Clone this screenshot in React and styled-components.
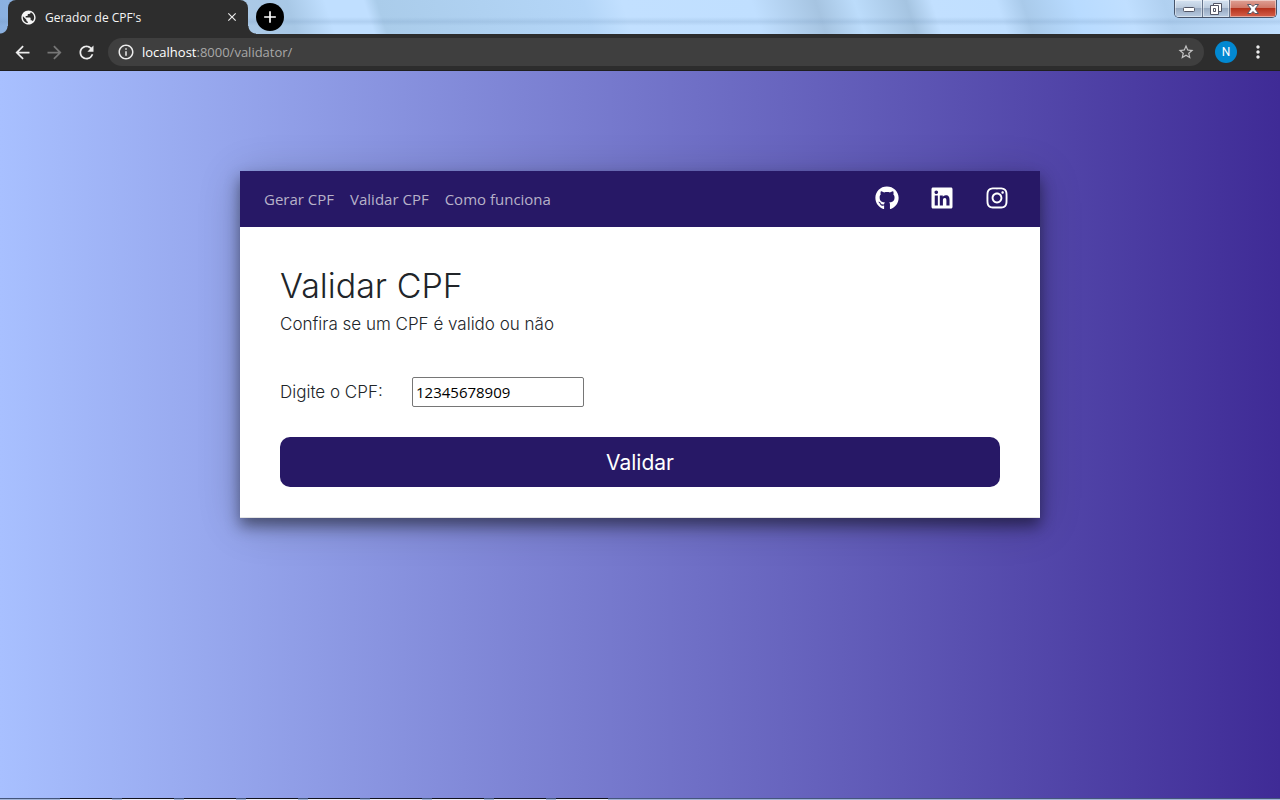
import React from 'react';
import styled, { createGlobalStyle } from 'styled-components';
import { FaGithub, FaLinkedin, FaInstagram } from 'react-icons/fa';
import { MdArrowBack, MdArrowForward, MdRefresh, MdInfoOutline, MdStarBorder, MdMoreVert, MdPublic, MdClose, MdAdd } from 'react-icons/md';

const GlobalStyle = createGlobalStyle`
  * { box-sizing: border-box; }
  html, body, #root { height: 100%; margin: 0; }
  body { font-family: "Open Sans", "Noto Sans", sans-serif; color: #212529; }
  button, input { font: inherit; }
  svg { display: block; }
`;

const Window = styled.div`
  display: flex;
  flex-direction: column;
  min-height: 100%;
`;

const TitleBar = styled.header`
  display: flex;
  align-items: flex-start;
  height: 34px;
  padding-left: 8px;
  background:
    linear-gradient(180deg, transparent 50%, rgba(110, 145, 185, 0.2) 64%, transparent 76%),
    linear-gradient(72deg, #8ab0e0 0, #abc9e6 20%, #a8c8e6 23%, #c0dfff 26%, #c0dfff 29%, #aaccea 30%, #b4d6f8 46%, #c2e0ff 49%, #c0dfff 59%, #a6c4e1 64%, #bcdcfb 67%, #a5c4e1 71%, #c2e0ff 73%, #c0dfff 78%, #a9caea 80%, #b8dbff 84%, #c0dfff 88%, #b0d0f0 91%, #c2e0ff 100%);
`;

const Tab = styled.div`
  position: relative;
  display: flex;
  align-items: center;
  gap: 8px;
  width: 240px;
  height: 34px;
  padding: 0 8px 0 12px;
  border-radius: 8px 8px 0 0;
  background: #2d2d2d;
  color: #f5f5f5;
  font-size: 12px;

  &::before, &::after {
    content: "";
    position: absolute;
    bottom: 0;
    width: 8px;
    height: 8px;
  }
  &::before { right: 100%; background: radial-gradient(circle at 0 0, transparent 7px, #2d2d2d 8px); }
  &::after { left: 100%; background: radial-gradient(circle at 100% 0, transparent 7px, #2d2d2d 8px); }
`;

const TabTitle = styled.span`
  flex: 1;
`;

const IconButton = styled.button`
  display: grid;
  place-items: center;
  flex: none;
  width: ${({ $size = 32 }) => $size}px;
  height: ${({ $size = 32 }) => $size}px;
  padding: 0;
  border: 0;
  background: transparent;
  color: ${({ $color = '#ececec' }) => $color};
`;

const NewTab = styled(IconButton)`
  margin: 3px 0 0 8px;
  border-radius: 50%;
  background: #000;
`;

const WindowControls = styled.div`
  display: flex;
  height: 18px;
  margin: 0 3px 0 auto;
  border: 1px solid #46546b;
  border-top: 0;
  border-radius: 0 0 5px 5px;
  overflow: hidden;
`;

const WindowButton = styled.button`
  display: grid;
  place-items: center;
  width: ${({ $width }) => $width}px;
  padding: 0;
  border: 0;
  border-right: ${({ $danger }) => ($danger ? 0 : '1px solid #66758c')};
  background: ${({ $danger }) => ($danger
    ? 'linear-gradient(#dfa095 0, #cf7868 45%, #b5321d 50%, #d5604b 100%)'
    : 'linear-gradient(#d5e3f2 0, #bccbdd 45%, #98aac2 50%, #b9cce2 100%)')};
  box-shadow: inset 0 0 0 1px rgba(255, 255, 255, 0.45);
`;

const Toolbar = styled.div`
  display: flex;
  align-items: center;
  height: 37px;
  padding: 0 6px;
  border-bottom: 1px solid #1f1f1f;
  background: #2d2d2d;
`;

const AddressBar = styled.div`
  display: flex;
  align-items: center;
  flex: 1;
  height: 28px;
  margin-left: 6px;
  padding: 0 2px 0 9px;
  border-radius: 14px;
  background: #3f3f3f;
  color: #ececec;
`;

const Address = styled.span`
  flex: 1;
  margin-left: 7px;
  color: #a8a8a8;
  font-size: 13px;
`;

const Host = styled.span`
  color: #fff;
`;

const Avatar = styled.button`
  width: 22px;
  height: 22px;
  margin: 0 5px 0 11px;
  padding: 0;
  border: 0;
  border-radius: 50%;
  background: #0288d1;
  color: #fff;
  font-family: Roboto, sans-serif;
  font-size: 12px;
`;

const Page = styled.main`
  flex: 1;
  padding: 100px 24px;
  background: linear-gradient(to right, #a8c0ff, #3f2b96);
`;

const Taskbar = styled.footer`
  display: flex;
  gap: 10px;
  height: 2px;
  padding-left: 60px;
  background: linear-gradient(#44567c 50%, #a3b5d8 50%);
`;

const TaskbarItem = styled.span`
  width: 52px;
  background: linear-gradient(#11131c 50%, #eef0fb 50%);
`;

const Card = styled.section`
  max-width: 800px;
  margin: 0 auto;
  background: #fff;
  box-shadow: 0 8px 14px rgba(0, 0, 0, 0.45), 0 6px 40px rgba(0, 0, 0, 0.2);
`;

const Nav = styled.nav`
  display: flex;
  align-items: center;
  justify-content: space-between;
  height: 56px;
  padding: 0 31px 0 24px;
  background: #271866;
`;

const NavLinks = styled.div`
  display: flex;
  gap: 16px;
`;

const NavLink = styled.a`
  color: #b7b2c9;
  font-size: 15px;
  text-decoration: none;
`;

const SocialLinks = styled.div`
  display: flex;
  gap: 31px;
  padding-bottom: 2px;
`;

const SocialLink = styled.a`
  color: #fff;
`;

const Content = styled.form`
  padding: 40px 40px 30px;
  border-bottom: 1px solid #e4e4e4;
  font-family: Inter, sans-serif;
  font-weight: 300;
`;

const Title = styled.h1`
  margin: 0;
  font-size: 34px;
  font-weight: 300;
  line-height: 38px;
`;

const Subtitle = styled.p`
  margin: 7px 0 0;
  font-size: 17px;
  line-height: 24px;
`;

const Field = styled.div`
  display: flex;
  align-items: center;
  margin: 41px 0 30px;
`;

const Label = styled.label`
  width: 132px;
  font-size: 17px;
`;

const Input = styled.input`
  width: 172px;
  height: 30px;
  padding: 1px 3px;
  border: 1px solid #767676;
  border-radius: 2px;
  color: #000;
  font-family: "Open Sans", sans-serif;
  font-size: 15px;
  font-weight: 400;
`;

const Submit = styled.button`
  display: block;
  width: 100%;
  height: 50px;
  border: 0;
  border-radius: 10px;
  background: #271866;
  color: #fff;
  font-size: 21px;
  font-weight: 400;
`;

const TASKS = ['a', 'b', 'c', 'd', 'e', 'f', 'g', 'h', 'i'];

export default function App() {
  return (
    <Window>
      <GlobalStyle />
      <TitleBar>
        <Tab>
          <MdPublic size={17} />
          <TabTitle>Gerador de CPF's</TabTitle>
          <IconButton $size={16} aria-label="Fechar guia"><MdClose size={14} stroke="currentColor" /></IconButton>
        </Tab>
        <NewTab $size={28} $color="#fff" aria-label="Nova guia"><MdAdd size={20} /></NewTab>
        <WindowControls>
          <WindowButton $width={28} aria-label="Minimizar">
            <svg width="14" height="8"><rect x="1.500" y="2.500" width="11" height="4" rx="1" fill="#fff" stroke="#535666" /></svg>
          </WindowButton>
          <WindowButton $width={27} aria-label="Restaurar">
            <svg width="14" height="14" fill="#fff" stroke="#535666"><path d="M4.500 1.500h8v8h-8z" /><path d="M1.500 3.500h8v9h-8zM4.500 6.500h2v3h-2z" fillRule="evenodd" /></svg>
          </WindowButton>
          <WindowButton $width={46} $danger aria-label="Fechar">
            <svg width="14" height="12" fill="#fff" stroke="#535666"><path d="M1.500 1.500h3.500l2 2 2-2h3.500l-3.500 4.500 3.500 4.500h-3.500l-2-2-2 2h-3.500l3.500-4.500z" /></svg>
          </WindowButton>
        </WindowControls>
      </TitleBar>
      <Toolbar>
        <IconButton aria-label="Voltar"><MdArrowBack size={21} /></IconButton>
        <IconButton $color="#767676" aria-label="Avançar"><MdArrowForward size={21} /></IconButton>
        <IconButton aria-label="Recarregar"><MdRefresh size={21} /></IconButton>
        <AddressBar>
          <MdInfoOutline size={18} />
          <Address><Host>localhost</Host>:8000/validator/</Address>
          <IconButton $color="#c4c4c4" aria-label="Favoritar"><MdStarBorder size={18} /></IconButton>
        </AddressBar>
        <Avatar aria-label="Perfil">N</Avatar>
        <IconButton aria-label="Menu"><MdMoreVert size={20} /></IconButton>
      </Toolbar>
      <Page>
        <Card>
          <Nav>
            <NavLinks>
              <NavLink href="#gerar">Gerar CPF</NavLink>
              <NavLink href="#validar">Validar CPF</NavLink>
              <NavLink href="#como-funciona">Como funciona</NavLink>
            </NavLinks>
            <SocialLinks>
              <SocialLink href="#github" aria-label="GitHub"><FaGithub size={24} /></SocialLink>
              <SocialLink href="#linkedin" aria-label="LinkedIn"><FaLinkedin size={24} /></SocialLink>
              <SocialLink href="#instagram" aria-label="Instagram"><FaInstagram size={24} /></SocialLink>
            </SocialLinks>
          </Nav>
          <Content onSubmit={(event) => event.preventDefault()}>
            <Title>Validar CPF</Title>
            <Subtitle>Confira se um CPF é valido ou não</Subtitle>
            <Field>
              <Label htmlFor="cpf">Digite o CPF:</Label>
              <Input id="cpf" defaultValue="12345678909" />
            </Field>
            <Submit>Validar</Submit>
          </Content>
        </Card>
      </Page>
      <Taskbar>
        {TASKS.map((task) => <TaskbarItem key={task} />)}
      </Taskbar>
    </Window>
  );
}
